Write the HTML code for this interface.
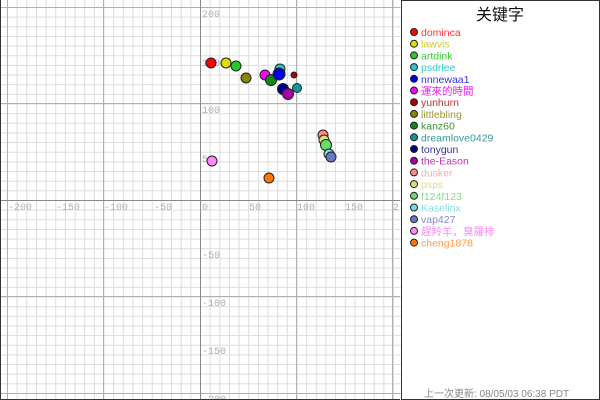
<!DOCTYPE html>
<html><head><meta charset="utf-8"><style>
body{margin:0;width:600px;height:400px;overflow:hidden;background:#fff;font-family:"Liberation Sans","Noto Sans CJK SC",sans-serif}
</style></head><body>
<svg width="600" height="400" xmlns="http://www.w3.org/2000/svg" style="position:absolute;left:0;top:0">
<defs>
<pattern id="g" x="200" y="200" width="9.65" height="9.65" patternUnits="userSpaceOnUse">
<path d="M0.5 0V9.65M0 0.5H9.65" stroke="#dcdcdc" stroke-width="1" fill="none"/>
</pattern>
</defs>
<rect x="0" y="0" width="401" height="400" fill="url(#g)"/>
<g stroke="#b0b0b0" stroke-width="1">
<line x1="103.5" y1="0" x2="103.5" y2="400"/><line x1="296.5" y1="0" x2="296.5" y2="400"/>
<line x1="7.5" y1="0" x2="7.5" y2="400"/><line x1="392.5" y1="0" x2="392.5" y2="400"/>
<line x1="0" y1="103.5" x2="400" y2="103.5"/><line x1="0" y1="296.5" x2="400" y2="296.5"/>
<line x1="0" y1="7.5" x2="400" y2="7.5"/><line x1="0" y1="393.5" x2="400" y2="393.5"/>
</g>
<g stroke="#888" stroke-width="1">
<line x1="200.5" y1="0" x2="200.5" y2="400"/><line x1="0" y1="200.5" x2="400" y2="200.5"/>
</g>
<g font-family="Liberation Mono,monospace" font-size="10" fill="#b0b0b0">
<text x="8" y="210">-200</text><text x="56" y="210">-150</text><text x="104" y="210">-100</text><text x="154" y="210">-50</text>
<text x="202" y="210">0</text><text x="249" y="210">50</text><text x="297" y="210">100</text><text x="345" y="210">150</text><text x="393" y="210">2</text>
<text x="202" y="17">200</text><text x="202" y="66">150</text><text x="202" y="113">100</text><text x="202" y="162">50</text>
<text x="202" y="258">-50</text><text x="202" y="306">-100</text><text x="202" y="354">-150</text><text x="202" y="402">-200</text>
</g>
<g stroke="#222" stroke-width="1">
<circle cx="211" cy="63" r="5" fill="#ff0000"/>
<circle cx="226" cy="63" r="5" fill="#dddd00"/>
<circle cx="236" cy="66" r="5" fill="#22cc22"/>
<circle cx="246" cy="78" r="5" fill="#888800"/>
<circle cx="265" cy="75" r="5" fill="#ff00ff"/>
<circle cx="280" cy="69" r="5" fill="#22cccc"/>
<circle cx="271" cy="80" r="5.5" fill="#118811"/>
<circle cx="279" cy="74" r="6" fill="#0000dd"/>
<circle cx="294" cy="75" r="3" fill="#aa0000"/>
<circle cx="297" cy="88" r="4.5" fill="#119999"/>
<circle cx="283" cy="89" r="5.5" fill="#000088"/>
<circle cx="288" cy="94" r="5.5" fill="#aa00aa"/>
<circle cx="323" cy="135" r="5" fill="#ff8888"/>
<circle cx="324" cy="140" r="5" fill="#dddd77"/>
<circle cx="326" cy="145" r="5.5" fill="#66dd66"/>
<circle cx="329" cy="154" r="5" fill="#77dddd"/>
<circle cx="331" cy="157" r="5" fill="#6677cc"/>
<circle cx="212" cy="161" r="5" fill="#ff88ff"/>
<circle cx="269" cy="178" r="5" fill="#ff7700"/>
</g>
<rect x="401.5" y="0.5" width="198" height="399" fill="#fff" stroke="#333"/>
<line x1="0.5" y1="0" x2="0.5" y2="400" stroke="#333"/>
<line x1="0" y1="399.5" x2="400" y2="399.5" stroke="#333"/>
<text x="500" y="20" font-size="16" text-anchor="middle" fill="#111">关键字</text>
<g font-size="10.5" stroke="none">
<g stroke="#222"><circle cx="414" cy="32" r="3.5" fill="#ff0000"/><circle cx="414" cy="43.7" r="3.5" fill="#dddd00"/><circle cx="414" cy="55.4" r="3.5" fill="#22cc22"/><circle cx="414" cy="67.1" r="3.5" fill="#22cccc"/><circle cx="414" cy="78.8" r="3.5" fill="#0000dd"/><circle cx="414" cy="90.5" r="3.5" fill="#ff00ff"/><circle cx="414" cy="102.2" r="3.5" fill="#aa0000"/><circle cx="414" cy="113.9" r="3.5" fill="#888800"/><circle cx="414" cy="125.6" r="3.5" fill="#118811"/><circle cx="414" cy="137.3" r="3.5" fill="#119999"/><circle cx="414" cy="149" r="3.5" fill="#000088"/><circle cx="414" cy="160.7" r="3.5" fill="#aa00aa"/><circle cx="414" cy="172.4" r="3.5" fill="#ff8888"/><circle cx="414" cy="184.1" r="3.5" fill="#dddd77"/><circle cx="414" cy="195.8" r="3.5" fill="#66dd66"/><circle cx="414" cy="207.5" r="3.5" fill="#77dddd"/><circle cx="414" cy="219.2" r="3.5" fill="#6677cc"/><circle cx="414" cy="230.9" r="3.5" fill="#ff88ff"/><circle cx="414" cy="242.6" r="3.5" fill="#ff7700"/></g>
<text x="421" y="36" fill="#ff3333">dominca</text>
<text x="421" y="47.7" fill="#cccc33">lawvis</text>
<text x="421" y="59.4" fill="#33cc33">artdink</text>
<text x="421" y="71.1" fill="#33cccc">psdrlee</text>
<text x="421" y="82.8" fill="#3333ee">nnnewaa1</text>
<text x="421" y="94.5" fill="#ee22ee">運來的時間</text>
<text x="421" y="106.2" fill="#bb3333">yunhurn</text>
<text x="421" y="117.9" fill="#999933">littlebling</text>
<text x="421" y="129.6" fill="#339933">kanz60</text>
<text x="421" y="141.3" fill="#339999">dreamlove0429</text>
<text x="421" y="153" fill="#333399">tonygun</text>
<text x="421" y="164.7" fill="#bb33bb">the-Eason</text>
<text x="421" y="176.4" fill="#ffaaaa">dusker</text>
<text x="421" y="188.1" fill="#dddd88">psps</text>
<text x="421" y="199.8" fill="#88dd88">f124f123</text>
<text x="421" y="211.5" fill="#88dddd">Kaselinx</text>
<text x="421" y="223.2" fill="#8888cc">vap427</text>
<text x="421" y="234.9" fill="#ff88ff">趕羚羊，臭羅排</text>
<text x="421" y="246.6" fill="#ff9944">cheng1878</text>
</g>
<text x="424" y="397" font-size="10" fill="#888">上一次更新: 08/05/03 06:38 PDT</text>
</svg>
</body></html>
